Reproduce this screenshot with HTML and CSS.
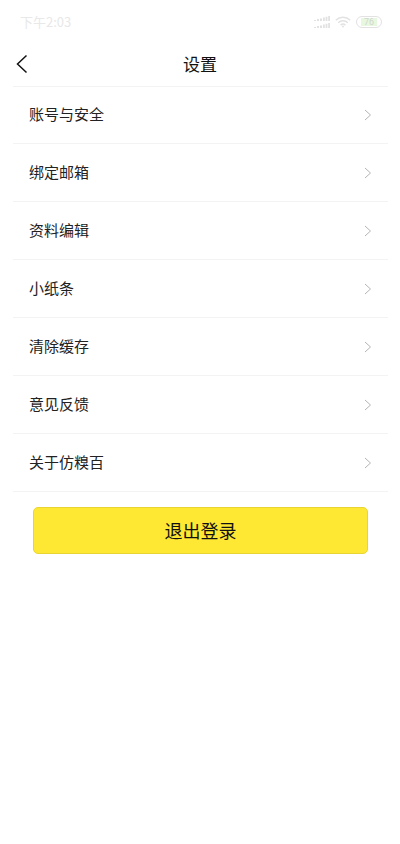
FILE: index.html
```html
<!DOCTYPE html>
<html lang="zh-CN">
<head>
<meta charset="utf-8">
<meta name="viewport" content="width=device-width, initial-scale=1">
<title>设置</title>
<link rel="stylesheet" href="styles.css">
</head>
<body>
<div class="status">
  <span class="time">下午2:03</span>
  <div class="status-icons">
    <svg width="16" height="12" viewBox="0 0 16 12" fill="#e2e2e2" aria-hidden="true">
      <path d="M0 4h2v1H0zM3 3h2v2H3zM6 2.500h2V5H6zM9 1.500h1.800V5H9zM11.600 .8h1.800V5h-1.800zM14.200 0H16v5h-1.800zM0 11h2v1H0zM3 10h2v2H3zM6 9.500h2V12H6zM9 8.500h1.800V12H9zM11.600 7.800h1.800V12h-1.800zM14.200 7H16v5h-1.800z"/>
    </svg>
    <svg width="16" height="12" viewBox="0 0 16 12" fill="none" stroke="#e2e2e2" stroke-width="1.5" aria-hidden="true">
      <path d="M.8 4.200a10.500 10.500 0 0 1 14.400 0M3.200 6.700a7 7 0 0 1 9.600 0M5.600 9.100a3.600 3.600 0 0 1 4.800 0"/>
      <circle cx="8" cy="10.600" r="1" fill="#e2e2e2" stroke="none"/>
    </svg>
    <span class="battery">76</span>
  </div>
</div>
<header class="header">
  <button class="back" type="button" aria-label="返回">
    <svg width="12" height="20" viewBox="0 0 12 20" fill="none" stroke="#111" stroke-width="1.5"><path d="M10.500 1.500 1.500 10l9 8.500"/></svg>
  </button>
  <h1 class="title">设置</h1>
</header>
<main class="main">
  <nav class="list">
    <a class="row" href="#account">账号与安全<svg class="chevron" viewBox="0 0 8 12"><path d="m1 1 5.500 5L1 11"/></svg></a>
    <a class="row" href="#email">绑定邮箱<svg class="chevron" viewBox="0 0 8 12"><path d="m1 1 5.500 5L1 11"/></svg></a>
    <a class="row" href="#profile">资料编辑<svg class="chevron" viewBox="0 0 8 12"><path d="m1 1 5.500 5L1 11"/></svg></a>
    <a class="row" href="#notes">小纸条<svg class="chevron" viewBox="0 0 8 12"><path d="m1 1 5.500 5L1 11"/></svg></a>
    <a class="row" href="#cache">清除缓存<svg class="chevron" viewBox="0 0 8 12"><path d="m1 1 5.500 5L1 11"/></svg></a>
    <a class="row" href="#feedback">意见反馈<svg class="chevron" viewBox="0 0 8 12"><path d="m1 1 5.500 5L1 11"/></svg></a>
    <a class="row" href="#about">关于仿糗百<svg class="chevron" viewBox="0 0 8 12"><path d="m1 1 5.500 5L1 11"/></svg></a>
  </nav>
  <button class="logout" type="button">退出登录</button>
</main>
</body>
</html>
```
FILE: styles.css
```css
* {
  box-sizing: border-box;
}

body {
  margin: 0;
  background: #fff;
  color: #111;
  font-family: "Noto Sans CJK SC", sans-serif;
}

button {
  margin: 0;
  padding: 0;
  font: inherit;
  color: inherit;
  cursor: pointer;
}

.status {
  display: flex;
  align-items: center;
  justify-content: space-between;
  height: 44px;
  padding: 0 18px 0 20px;
  color: #e8e8e8;
}

.time {
  font-size: 13px;
  line-height: 20px;
}

.status-icons {
  display: flex;
  align-items: center;
  gap: 5px;
}

.battery {
  width: 26px;
  height: 12px;
  border: 1px solid #e2e2e2;
  border-radius: 6px;
  background: linear-gradient(#e8f8e0, #e8f8e0) center / 16px 8px no-repeat;
  color: #d0d6cc;
  font-family: Roboto, sans-serif;
  font-size: 9px;
  line-height: 10px;
  text-align: center;
}

.header {
  display: grid;
  grid-template-columns: 44px 1fr 44px;
  align-items: center;
  height: 42px;
  padding-bottom: 3px;
}

.back {
  display: flex;
  align-items: center;
  height: 38px;
  padding-left: 16px;
  border: 0;
  background: none;
}

.title {
  margin: 0;
  font-size: 17px;
  font-weight: 400;
  line-height: 24px;
  text-align: center;
}

.main {
  padding: 0 12px 0 13px;
}

.list {
  border-top: 1px solid #f3f3f3;
}

.row {
  display: flex;
  align-items: center;
  justify-content: space-between;
  height: 58px;
  padding: 0 16px 2px;
  border-bottom: 1px solid #f3f3f3;
  color: #222;
  font-size: 15px;
  line-height: 22px;
  text-decoration: none;
}

.row:first-child {
  height: 57px;
}

.chevron {
  width: 8px;
  height: 12px;
  margin-top: 2px;
  fill: none;
  stroke: #b4b4b4;
  stroke-width: 1;
}

.logout {
  display: block;
  width: calc(100% - 40px);
  height: 47px;
  margin: 15px auto 0;
  padding-bottom: 2px;
  border: 1px solid #e8d534;
  border-radius: 5px;
  background: #ffe833;
  font-size: 18px;
  line-height: 26px;
}
```
